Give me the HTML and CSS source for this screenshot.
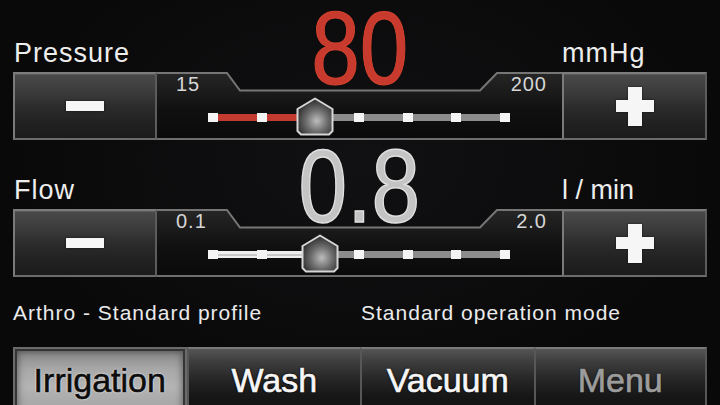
FILE: index.html
```html
<!DOCTYPE html>
<html>
<head>
<meta charset="utf-8">
<link rel="stylesheet" href="styles.css">
</head>
<body>
<div class="screen">
  <section class="ctrl">
    <div class="head">
      <span class="label">Pressure</span>
      <span class="value value-red">80</span>
      <span class="unit">mmHg</span>
    </div>
    <div class="row">
      <div class="btn">
        <svg width="38" height="10" viewBox="0 0 38 10"><rect x="0" y="0" width="38" height="10" fill="#f6f6f6"/></svg>
      </div>
      <div class="panel">
        <svg class="panel-shape" viewBox="0 0 405 68" preserveAspectRatio="none">
          <defs>
            <linearGradient id="pf1" x1="0" y1="0" x2="0" y2="1">
              <stop offset="0" stop-color="#262626"/>
              <stop offset="0.55" stop-color="#101010"/>
              <stop offset="1" stop-color="#0a0a0a"/>
            </linearGradient>
          </defs>
          <path d="M0 1 H70 L83 18.5 H323 L340 1 H405 V68 H0 Z" fill="url(#pf1)"/>
          <path d="M0 1 H70 L83 18.5 H323 L340 1 H405" fill="none" stroke="#767676" stroke-width="2"/>
          <path d="M0 67 H405" fill="none" stroke="#6e6e6e" stroke-width="2"/>
        </svg>
        <div class="limits"><span>15</span><span>200</span></div>
        <div class="track track-red" style="--p:0.351">
          <i class="tick"></i><i class="tick"></i><i class="tick"></i><i class="tick"></i><i class="tick"></i><i class="tick"></i><i class="tick"></i>
          <svg class="thumb" width="38" height="39" viewBox="0 0 38 39">
            <defs>
              <radialGradient id="th1" cx="0.55" cy="0.62" r="0.62">
                <stop offset="0" stop-color="#bdbdbd"/>
                <stop offset="0.5" stop-color="#6c6c6c"/>
                <stop offset="1" stop-color="#2a2a2a"/>
              </radialGradient>
            </defs>
            <polygon points="19,1.5 36.5,12 36.5,34 33,37.5 5,37.5 1.5,34 1.5,12" fill="url(#th1)" stroke="#d6d6d6" stroke-width="2" stroke-linejoin="round"/>
          </svg>
        </div>
      </div>
      <div class="btn">
        <svg width="38" height="39" viewBox="0 0 38 39"><rect x="0" y="13" width="38" height="12" fill="#f6f6f6"/><rect x="12" y="0" width="14" height="39" fill="#f6f6f6"/></svg>
      </div>
    </div>
  </section>

  <section class="ctrl">
    <div class="head head-flow">
      <span class="label">Flow</span>
      <span class="value value-grey">0.8</span>
      <span class="unit unit-plain">l / min</span>
    </div>
    <div class="row row-flow">
      <div class="btn">
        <svg width="38" height="10" viewBox="0 0 38 10"><rect x="0" y="0" width="38" height="10" fill="#f6f6f6"/></svg>
      </div>
      <div class="panel">
        <svg class="panel-shape" viewBox="0 0 405 68" preserveAspectRatio="none">
          <defs>
            <linearGradient id="pf2" x1="0" y1="0" x2="0" y2="1">
              <stop offset="0" stop-color="#262626"/>
              <stop offset="0.55" stop-color="#101010"/>
              <stop offset="1" stop-color="#0a0a0a"/>
            </linearGradient>
          </defs>
          <path d="M0 1 H70 L83 18.5 H323 L340 1 H405 V68 H0 Z" fill="url(#pf2)"/>
          <path d="M0 1 H70 L83 18.5 H323 L340 1 H405" fill="none" stroke="#767676" stroke-width="2"/>
          <path d="M0 67 H405" fill="none" stroke="#6e6e6e" stroke-width="2"/>
        </svg>
        <div class="limits"><span>0.1</span><span>2.0</span></div>
        <div class="track track-white" style="--p:0.368">
          <i class="tick"></i><i class="tick"></i><i class="tick"></i><i class="tick"></i><i class="tick"></i><i class="tick"></i><i class="tick"></i>
          <svg class="thumb" width="38" height="39" viewBox="0 0 38 39">
            <defs>
              <radialGradient id="th2" cx="0.55" cy="0.62" r="0.62">
                <stop offset="0" stop-color="#bdbdbd"/>
                <stop offset="0.5" stop-color="#6c6c6c"/>
                <stop offset="1" stop-color="#2a2a2a"/>
              </radialGradient>
            </defs>
            <polygon points="19,1.5 36.5,12 36.5,34 33,37.5 5,37.5 1.5,34 1.5,12" fill="url(#th2)" stroke="#d6d6d6" stroke-width="2" stroke-linejoin="round"/>
          </svg>
        </div>
      </div>
      <div class="btn">
        <svg width="38" height="39" viewBox="0 0 38 39"><rect x="0" y="13" width="38" height="12" fill="#f6f6f6"/><rect x="12" y="0" width="14" height="39" fill="#f6f6f6"/></svg>
      </div>
    </div>
  </section>

  <div class="status">
    <span>Arthro - Standard profile</span>
    <span class="status-right">Standard operation mode</span>
  </div>

  <nav class="tabs">
    <div class="tab tab-active">Irrigation</div>
    <div class="tab">Wash</div>
    <div class="tab">Vacuum</div>
    <div class="tab tab-disabled">Menu</div>
  </nav>
</div>
</body>
</html>
```

FILE: styles.css
```css
html, body {
  margin: 0;
  padding: 0;
  background: #0a0a0b;
}

body {
  width: 720px;
  height: 405px;
  overflow: hidden;
  font-family: "Liberation Sans", Arial, sans-serif;
  color: #ececec;
}

.screen {
  width: 720px;
  height: 405px;
  padding: 0 13px;
  box-sizing: border-box;
  overflow: hidden;
  background: radial-gradient(ellipse at 50% 40%, #111113 0%, #09090a 70%);
}

.head {
  display: grid;
  grid-template-columns: 144px 1fr 145px;
  align-items: end;
}

.label,
.unit {
  padding-bottom: 21px;
  font-size: 27px;
  line-height: 27px;
  letter-spacing: 1px;
  color: #ededed;
  white-space: nowrap;
}

.head-flow .label,
.head-flow .unit {
  padding-bottom: 22px;
}

.label {
  padding-left: 1px;
}

.unit-plain {
  letter-spacing: 0;
}

.value {
  position: relative;
  z-index: 1;
  justify-self: center;
  align-self: start;
  margin-top: 8px;
  font-size: 104px;
  line-height: 80px;
  display: inline-block;
  transform: scaleX(0.84);
  white-space: nowrap;
}

.value-red {
  color: #c93a2e;
  -webkit-text-stroke: 1px #d4432f;
}

.value-grey {
  margin-top: 6px;
  color: #c4c4c4;
  -webkit-text-stroke: 1.5px #e0e0e0;
}

.row {
  display: grid;
  grid-template-columns: 144px 1fr 145px;
  height: 68px;
  margin-top: -16px;
}

.row-flow {
  margin-top: -17px;
}

.btn {
  box-sizing: border-box;
  height: 68px;
  display: flex;
  align-items: center;
  justify-content: center;
  border: 2px solid #737373;
  border-color: #7c7c7c #5c5c5c #6c6c6c #7a7a7a;
  background: linear-gradient(to bottom, #4a4a4a 0%, #3a3a3a 30%, #2c2c2c 50%, #222 75%, #1b1b1b 100%);
  box-shadow: inset 0 1px 0 #5a5a5a;
}

.btn svg {
  filter: drop-shadow(0 0 1px rgba(0, 0, 0, 0.6));
}

.panel {
  position: relative;
  z-index: 0;
  height: 68px;
  padding-top: 2px;
  box-sizing: border-box;
}

.panel-shape {
  position: absolute;
  top: 0;
  left: 0;
  width: 100%;
  height: 100%;
  z-index: -1;
}

.limits {
  display: flex;
  justify-content: space-between;
  padding: 0 15px 0 19px;
  height: 20px;
  font-size: 20px;
  line-height: 20px;
  letter-spacing: 1px;
  color: #d6d6d6;
}

.track {
  position: relative;
  margin: 19px 0 0 51px;
  width: 302px;
  height: 9px;
  display: flex;
  justify-content: space-between;
  align-items: center;
  background-repeat: no-repeat;
  background-size: 100% 7px;
  background-position: 0 50%;
}

.track-red {
  background-image: linear-gradient(to right, #c23a30 0, #c23a30 calc(5px + var(--p) * 292px), #8c8c8c 0);
}

.track-white {
  background-image:
    linear-gradient(to right, #c9c9c9 0, #c9c9c9 calc(5px + var(--p) * 292px), transparent 0),
    linear-gradient(to right, #efefef 0, #efefef calc(5px + var(--p) * 292px), #8c8c8c 0);
  background-size: 100% 2px, 100% 7px;
  background-position: 0 50%, 0 50%;
}

.tick {
  display: block;
  width: 10px;
  height: 9px;
  background: #f4f4f4;
}

.thumb {
  position: absolute;
  top: -16px;
  left: calc(5px + var(--p) * 292px - 19px);
}

.status {
  display: grid;
  grid-template-columns: 1fr 1fr;
  margin-top: 25px;
  font-size: 21px;
  line-height: 21px;
  letter-spacing: 1px;
  color: #ebebeb;
  white-space: nowrap;
}

.status-right {
  padding-left: 1px;
}

.tabs {
  display: grid;
  grid-template-columns: repeat(4, 1fr);
  margin-top: 24px;
  height: 70px;
}

.tab {
  box-sizing: border-box;
  height: 70px;
  padding-top: 14px;
  text-align: center;
  font-size: 34px;
  line-height: 34px;
  color: #f6f6f6;
  -webkit-text-stroke: 0.6px #f6f6f6;
  text-shadow: 0 0 1px #000, 0 0 2px #000, 0 0 2px #000;
  border-top: 2px solid #7a7a7a;
  border-left: 2px solid #575757;
  background: linear-gradient(to bottom, #555 0%, #3c3c3c 20%, #262626 45%, #161616 70%, #111 100%);
}

.tab:last-child {
  border-right: 2px solid #575757;
}

.tab-active {
  border: 2px solid #6a6a6a;
  border-bottom: none;
  color: #0c0c0c;
  -webkit-text-stroke: 0.6px #0c0c0c;
  text-shadow: 0 0 2px #f2f2f2, 0 0 2px #f2f2f2;
  background: linear-gradient(to bottom, #858585 0%, #a8a8a8 30%, #b4b4b4 55%, #a0a0a0 100%);
  box-shadow: inset 0 0 0 2px #353535, inset 0 0 7px 3px rgba(40, 40, 40, 0.55);
}

.tab-disabled {
  color: #9c9c9c;
  -webkit-text-stroke: 0.6px #9c9c9c;
  text-shadow: 0 0 1px #2a2a2a, 0 0 2px #000;
}
```
